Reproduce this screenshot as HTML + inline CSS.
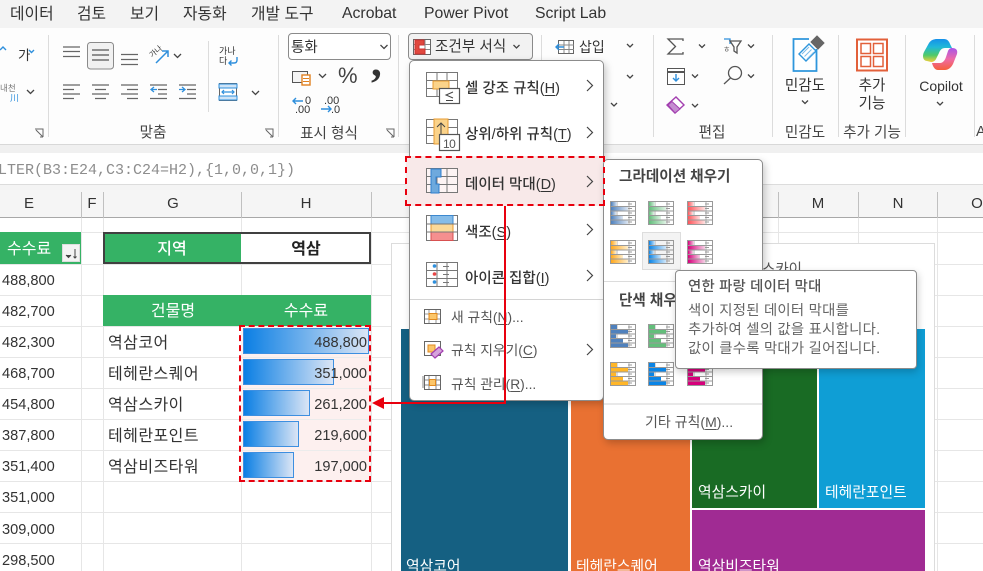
<!DOCTYPE html>
<html lang="ko"><head><meta charset="utf-8"><title>Excel</title>
<style>
html,body{margin:0;padding:0;width:983px;height:571px;overflow:hidden}
#w{position:relative;width:983px;height:571px;overflow:hidden;background:#fff;font-family:"Liberation Sans","Noto Sans CJK KR",sans-serif;color:#333}
.a{position:absolute}
.t{position:absolute;white-space:nowrap;line-height:1}
.c{transform:translateX(-50%)}
.tab{font-size:15.800px;color:#333;top:7px}
.rb{font-size:14.600px;color:#444}
.hl{position:absolute;background:#e6e6e6}
.vs{position:absolute;width:1px;background:#dcdcdc}
.num{position:absolute;white-space:nowrap;line-height:1;font-size:14.600px;color:#333}
.nm{position:absolute;white-space:nowrap;line-height:1;font-size:16px;letter-spacing:.45px;color:#333;left:108px}
.m{position:absolute;white-space:nowrap;line-height:1;font-size:14.500px;font-weight:500;color:#333;left:465px}
.ms{position:absolute;white-space:nowrap;line-height:1;font-size:13.800px;color:#555;left:451px}
.bar{position:absolute;left:243px;height:26px;box-sizing:border-box;border:1px solid #3d8fe0;background:linear-gradient(90deg,#0b7fe4,#dbe5f5)}
.col{position:absolute;top:196px;font-size:15px;line-height:1;color:#333;transform:translateX(-50%)}
.tr{font-size:14.800px;color:#fff}
svg{position:absolute;overflow:visible}
u{text-underline-offset:2px}
</style></head><body><div id="w">

<!-- tab bar -->
<div class="a" style="left:0;top:0;width:983px;height:28px;background:#f3f3f3"></div>
<div class="t tab" style="left:10px">데이터</div>
<div class="t tab" style="left:77px">검토</div>
<div class="t tab" style="left:130px">보기</div>
<div class="t tab" style="left:183px">자동화</div>
<div class="t tab" style="left:251px">개발 도구</div>
<div class="t tab" style="left:342px;top:6px">Acrobat</div>
<div class="t tab" style="left:424px;top:6px">Power Pivot</div>
<div class="t tab" style="left:535px;top:6px">Script Lab</div>

<!-- ribbon -->
<div class="a" style="left:0;top:28px;width:983px;height:116px;background:#fdfdfd"></div>
<div class="a" style="left:0;top:144px;width:983px;height:9px;background:#f0f0f0;border-top:1px solid #d8d8d8;box-sizing:border-box"></div>
<div class="vs" style="left:48px;top:35px;height:102px"></div>
<div class="vs" style="left:208px;top:41px;height:71px"></div>
<div class="vs" style="left:278px;top:35px;height:102px"></div>
<div class="vs" style="left:398px;top:35px;height:102px"></div>
<div class="vs" style="left:541px;top:35px;height:102px"></div>
<div class="vs" style="left:653px;top:35px;height:102px"></div>
<div class="vs" style="left:772px;top:35px;height:102px"></div>
<div class="vs" style="left:838px;top:35px;height:102px"></div>
<div class="vs" style="left:905px;top:35px;height:102px"></div>
<div class="vs" style="left:974px;top:35px;height:102px"></div>

<!-- left ribbon icons -->
<svg style="left:0;top:0" width="400" height="145" fill="none" stroke="#555">
  <path d="M0 50l3-3 3 3" stroke="#2e8fdc" stroke-width="1.400"/>
  <path d="M29 50l2.500 2.500L34 50" stroke="#2e8fdc" stroke-width="1.400"/>
  <rect x="87.500" y="42.500" width="26" height="26.500" rx="3" fill="#f1f1f1" stroke="#8a8a8a"/>
  <path d="M63 47h17M63 51.500h17M63 56.500h17" stroke="#666" stroke-width="1.300"/>
  <path d="M92 50h17M92 55h17M92 60h17" stroke="#555" stroke-width="1.300"/>
  <path d="M121 54.500h17M121 59.500h17M121 64.500h17" stroke="#666" stroke-width="1.300"/>
  <path d="M63 85h17M63 89.500h11M63 94h17M63 98.500h11" stroke="#666" stroke-width="1.300"/>
  <path d="M92 85h17M95 89.500h11M92 94h17M95 98.500h11" stroke="#666" stroke-width="1.300"/>
  <path d="M121 85h17M127 89.500h11M121 94h17M127 98.500h11" stroke="#666" stroke-width="1.300"/>
  <path d="M158 85h9M158 89.500h9M158 94h9M150 98.500h17M150 85h17" stroke="#666" stroke-width="1.300"/>
  <path d="M157 89.500h-6m3-2.500l-3 2.500 3 2.500" stroke="#2e8fdc" stroke-width="1.300"/>
  <path d="M187 85h9M187 89.500h9M187 94h9M179 98.500h17M179 85h17" stroke="#666" stroke-width="1.300"/>
  <path d="M179 89.500h6m-3-2.500l3 2.500-3 2.500" stroke="#2e8fdc" stroke-width="1.300"/>
  <path d="M156 63l12-12m-6 0h6v6" stroke="#2e8fdc" stroke-width="1.500"/>
  <path d="M237 57v3q0 3-3 3h-5m2.500-2.500l-2.500 2.500 2.500 2.500" stroke="#2e8fdc" stroke-width="1.400"/>
  <rect x="219.500" y="83.500" width="17" height="17" stroke="#666" fill="#fff"/>
  <path d="M219 84h18v4h-18zM219 96h18v4h-18z" fill="#cfe4f7" stroke="#2e8fdc"/>
  <path d="M222 92h12m-10-2l-2 2 2 2m8-4l2 2-2 2" stroke="#2e8fdc" stroke-width="1.200"/>
  <path d="M174 54l3.500 3.500L181 54M27 90l3.500 3.500L34 90M252 91l3.500 3.500 3.500-3.500M319 74l3.500 3.500 3.500-3.500" stroke="#444" stroke-width="1.300"/>
  <path d="M35 129h8v8M36 130l7 7M40 137h3" stroke="#666"/>
  <path d="M265 129h8v8M266 130l7 7M270 137h3" stroke="#666"/>
  <path d="M386 129h8v8M387 130l7 7M391 137h3" stroke="#666"/>
  <rect x="292.500" y="71.500" width="15" height="11" stroke="#555" fill="#f4f4f4"/>
  <rect x="302" y="75" width="8" height="10" fill="#fff" stroke="#e08020" stroke-width="1.400"/>
  <path d="M303 78.500h6M303 81.500h6" stroke="#e08020"/>
  <path d="M303 101h-10m3-3l-3 3 3 3" stroke="#2e8fdc" stroke-width="1.400"/>
  <path d="M321 109h10m-3-3l3 3-3 3" stroke="#2e8fdc" stroke-width="1.400"/>
</svg>
<div class="t" style="left:18px;top:49px;font-size:13.500px;color:#333">가</div>
<div class="t" style="left:0;top:84px;font-size:8.500px;color:#777">내천</div>
<div class="t" style="left:10px;top:93px;font-size:9px;color:#2e8fdc;font-family:'Noto Sans CJK KR',sans-serif">川</div>
<div class="t" style="left:149px;top:48px;font-size:7.500px;color:#333;transform:rotate(-40deg)">가나</div>
<div class="t" style="left:219px;top:47px;font-size:9px;color:#333">가나</div>
<div class="t" style="left:219px;top:57px;font-size:9px;color:#333">다</div>
<div class="a" style="left:288px;top:33px;width:103px;height:27px;box-sizing:border-box;border:1px solid #8a8a8a;border-radius:4px;background:#fff"></div>
<div class="t" style="left:291px;top:41px;font-size:14.500px;color:#333">통화</div>
<svg style="left:380px;top:44px" width="8" height="6" fill="none" stroke="#444" stroke-width="1.300"><path d="M.5 1l3.500 3.500L7.500 1"/></svg>
<div class="t" style="left:338px;top:65px;font-size:22px;color:#444">%</div>
<div class="t" style="left:371px;top:41px;font-size:43px;font-weight:700;color:#333;font-family:'Liberation Serif',serif">,</div>
<div class="t" style="left:305px;top:96px;font-size:11px;color:#333">0</div>
<div class="t" style="left:295px;top:105px;font-size:11px;color:#333">.00</div>
<div class="t" style="left:324px;top:96px;font-size:11px;color:#333">.00</div>
<div class="t" style="left:331px;top:105px;font-size:11px;color:#333">.0</div>
<div class="t rb c" style="left:153px;top:126px">맞춤</div>
<div class="t rb c" style="left:329px;top:127px">표시 형식</div>

<!-- right ribbon -->
<div class="a" style="left:408px;top:33px;width:125px;height:27px;box-sizing:border-box;border:1px solid #8a8a8a;border-radius:4px;background:#f2f2f2"></div>
<svg style="left:0;top:0" width="983" height="145" fill="none" stroke="#555">
  <defs>
    <linearGradient id="cp1" x1="0" y1="0" x2="0" y2="1"><stop offset="0" stop-color="#1590ea"/><stop offset=".35" stop-color="#20b8d8"/><stop offset=".7" stop-color="#4fca6a"/><stop offset="1" stop-color="#f4d03a"/></linearGradient>
    <linearGradient id="cp2" x1="0" y1="0" x2="0" y2="1"><stop offset="0" stop-color="#a855e8"/><stop offset=".5" stop-color="#ee6aa8"/><stop offset="1" stop-color="#f5603a"/></linearGradient>
  </defs>
  <rect x="413.500" y="39.500" width="17" height="15" fill="#fff" stroke="#666"/>
  <path d="M414 44.500h16M414 49.500h16M419 40v14M425 40v14" stroke="#888"/>
  <path d="M415 40h9v5h-5v4h6v5h-10z" fill="#e0483e" stroke="#c33"/>
  <rect x="558.500" y="40.500" width="15" height="13" fill="#fff" stroke="#666"/>
  <path d="M559 45h15M559 49.500h15M564 41v12M569 41v12" stroke="#888"/>
  <path d="M564 47h-8m3-3l-3 3 3 3" stroke="#2e8fdc" stroke-width="1.400"/>
  <path d="M627 44l3 3 3-3M627 75l3 3 3-3M611 103l3 3 3-3M699 44.500l3 3 3-3M748 44.500l3 3 3-3M692 74.500l3 3 3-3M748 74.500l3 3 3-3M692 104l3 3 3-3M802 100.500l3 3 3-3M937 102l3 3 3-3" stroke="#444" stroke-width="1.300"/>
  <path d="M683 41v-2h-15l7.500 7.500-7.500 7.500h15v-2" stroke="#555" stroke-width="1.300"/>
  <path d="M724 39h6v5" stroke="#2e8fdc" stroke-width="1.300"/>
  <path d="M730 41h11l-4 6v6l-3-2v-4z" stroke="#555" stroke-width="1.300"/>
  <rect x="667.500" y="68.500" width="17" height="16" fill="#fff" stroke="#555"/>
  <path d="M667 72h18" stroke="#555" stroke-width="2"/>
  <path d="M676 74v7m-3-3l3 3 3-3" stroke="#2e8fdc" stroke-width="1.400"/>
  <circle cx="735" cy="73" r="6.500" stroke="#555" stroke-width="1.300"/>
  <path d="M730.500 78l-6.500 6" stroke="#555" stroke-width="1.300"/>
  <path d="M667 105l9-8 8 8-9 8z" fill="#fff" stroke="#a33fb0" stroke-width="1.400"/>
  <path d="M668 105l4-3.500 8 7.500-5 4z" fill="#c58ed0" stroke="#a33fb0"/>
  <path d="M809 39h-15.500v32h23v-22" stroke="#2e96dc" stroke-width="1.800" fill="#fff"/>
  <path d="M799 54l10-10 7 7-10 10z" fill="#fff" stroke="#2e96dc" stroke-width="1.400"/>
  <path d="M802 54l7-7M804.500 56.500l7-7M807 59l7-7" stroke="#7cbcea" stroke-width="1"/>
  <path d="M811 42l6-6 7 7-6 6z" fill="#666" stroke="#666"/>
  <rect x="857" y="39.500" width="30" height="31" fill="#fff" stroke="#e2603a" stroke-width="2"/>
  <rect x="861" y="43.500" width="9.500" height="10" stroke="#e2603a" stroke-width="1.500"/>
  <rect x="873.500" y="43.500" width="9.500" height="10" stroke="#e2603a" stroke-width="1.500"/>
  <rect x="861" y="56.500" width="9.500" height="10" stroke="#e2603a" stroke-width="1.500"/>
  <rect x="873.500" y="56.500" width="9.500" height="10" stroke="#e2603a" stroke-width="1.500"/>
  <path d="M927 61C923 61 922 56 924 52L929 43C931 40 934 39 937 39H944C947 39 949 41 950 44L952 48H945C942 48 940 50 939 53L936 59C935 61 933 62 931 62Z" fill="url(#cp1)" stroke="none"/>
  <path d="M938 70C935 70 933 67 932 63H940C943 63 945 60 946 57L948 51C949 49 950 48 952 48C956 48 958 50 957 54L953 64C951 68 948 70 945 70Z" fill="url(#cp2)" stroke="none"/>
</svg>
<div class="t" style="left:723px;top:46px;font-size:8px;color:#666">ㅎ</div>
<div class="t" style="left:435px;top:40px;font-size:14.600px;color:#333">조건부 서식</div>
<svg style="left:513px;top:44px" width="8" height="6" fill="none" stroke="#444" stroke-width="1.300"><path d="M.5 1l3 3 3-3"/></svg>
<div class="t" style="left:579px;top:40px;font-size:14px;color:#333">삽입</div>
<div class="t c" style="left:805px;top:79px;font-size:14.600px;color:#333">민감도</div>
<div class="t c" style="left:872px;top:79px;font-size:14.600px;color:#333">추가</div>
<div class="t c" style="left:872px;top:97px;font-size:14.600px;color:#333">기능</div>
<div class="t c" style="left:941px;top:79px;font-size:14px;color:#333">Copilot</div>
<div class="t rb c" style="left:712px;top:126px">편집</div>
<div class="t rb c" style="left:805px;top:126px">민감도</div>
<div class="t rb c" style="left:872px;top:126px">추가 기능</div>
<div class="t rb" style="left:976px;top:125px">A</div>

<!-- formula bar -->
<div class="a" style="left:0;top:153px;width:983px;height:31px;background:#fff;border-bottom:1px solid #dcdcdc"></div>
<div class="t" style="left:-2px;top:163px;font:15px/1 'Liberation Mono',monospace;color:#8d8d8d">LTER(B3:E24,C3:C24=H2),{1,0,0,1})</div>
<div class="a" style="left:0;top:185px;width:983px;height:5px;background:#f4f4f4"></div>

<!-- col headers -->
<div class="a" style="left:0;top:190px;width:983px;height:28px;background:#f5f5f5;border-bottom:1px solid #a8a8a8;box-sizing:border-box"></div>
<div class="vs" style="left:81px;top:192px;height:26px;background:#c0c0c0"></div>
<div class="vs" style="left:103px;top:192px;height:26px;background:#c0c0c0"></div>
<div class="vs" style="left:241px;top:192px;height:26px;background:#c0c0c0"></div>
<div class="vs" style="left:371px;top:192px;height:26px;background:#c0c0c0"></div>
<div class="vs" style="left:778px;top:192px;height:26px;background:#c0c0c0"></div>
<div class="vs" style="left:858px;top:192px;height:26px;background:#c0c0c0"></div>
<div class="vs" style="left:937px;top:192px;height:26px;background:#c0c0c0"></div>
<div class="col" style="left:29px">E</div>
<div class="col" style="left:92px">F</div>
<div class="col" style="left:173px">G</div>
<div class="col" style="left:306px">H</div>
<div class="col" style="left:818px">M</div>
<div class="col" style="left:898px">N</div>
<div class="col" style="left:977px">O</div>

<!-- grid -->
<div class="hl" style="left:0;top:232px;width:983px;height:1px"></div>
<div class="hl" style="left:0;top:264px;width:983px;height:1px"></div>
<div class="hl" style="left:0;top:295px;width:983px;height:1px"></div>
<div class="hl" style="left:0;top:326px;width:983px;height:1px"></div>
<div class="hl" style="left:0;top:357px;width:983px;height:1px"></div>
<div class="hl" style="left:0;top:388px;width:983px;height:1px"></div>
<div class="hl" style="left:0;top:419px;width:983px;height:1px"></div>
<div class="hl" style="left:0;top:450px;width:983px;height:1px"></div>
<div class="hl" style="left:0;top:481px;width:983px;height:1px"></div>
<div class="hl" style="left:0;top:512px;width:983px;height:1px"></div>
<div class="hl" style="left:0;top:543px;width:983px;height:1px"></div>
<div class="vs" style="left:81px;top:218px;height:353px;background:#e6e6e6"></div>
<div class="vs" style="left:103px;top:218px;height:353px;background:#e6e6e6"></div>
<div class="vs" style="left:241px;top:218px;height:353px;background:#e6e6e6"></div>
<div class="vs" style="left:371px;top:218px;height:353px;background:#e6e6e6"></div>
<div class="vs" style="left:778px;top:218px;height:50px;background:#e6e6e6"></div>
<div class="vs" style="left:858px;top:218px;height:50px;background:#e6e6e6"></div>
<div class="vs" style="left:937px;top:218px;height:353px;background:#e6e6e6"></div>

<!-- E column -->
<div class="a" style="left:0;top:232px;width:81px;height:32px;background:#35b265"></div>
<div class="t" style="left:7px;top:242px;font-size:16px;color:#fff">수수료</div>
<div class="a" style="left:62px;top:244px;width:18px;height:18px;background:#f3f3f3;border:1px solid #ddd;box-sizing:border-box"></div>
<svg style="left:64px;top:248px" width="15" height="12" fill="none" stroke="#444"><path d="M2 7l2.500 2.500L7 7" fill="#444"/><path d="M11 1v9m-1.500-1.500l1.500 1.500 1.500-1.500"/></svg>
<div class="num" style="left:2px;top:274px">488,800</div>
<div class="num" style="left:2px;top:305px">482,700</div>
<div class="num" style="left:2px;top:336px">482,300</div>
<div class="num" style="left:2px;top:367px">468,700</div>
<div class="num" style="left:2px;top:398px">454,800</div>
<div class="num" style="left:2px;top:429px">387,800</div>
<div class="num" style="left:2px;top:460px">351,400</div>
<div class="num" style="left:2px;top:491px">351,000</div>
<div class="num" style="left:2px;top:523px">309,000</div>
<div class="num" style="left:2px;top:554px">298,500</div>

<!-- region box -->
<div class="a" style="left:103px;top:232px;width:268px;height:32px;box-sizing:border-box;border:2px solid #404040;background:#fff"></div>
<div class="a" style="left:105px;top:234px;width:136px;height:28px;background:#35b265"></div>
<div class="t c" style="left:172px;top:242px;font-size:16px;color:#fff;font-weight:500">지역</div>
<div class="t c" style="left:306px;top:242px;font-size:16px;color:#222;font-weight:700">역삼</div>

<!-- table -->
<div class="a" style="left:103px;top:295px;width:268px;height:31px;background:#35b265"></div>
<div class="t c" style="left:173px;top:304px;font-size:16px;color:#fff">건물명</div>
<div class="t c" style="left:306px;top:304px;font-size:16px;color:#fff">수수료</div>
<div class="a" style="left:241px;top:326px;width:130px;height:155px;background:#fdf0ef"></div>
<div class="hl" style="left:241px;top:357px;width:130px;height:1px;background:#ececec"></div>
<div class="hl" style="left:241px;top:388px;width:130px;height:1px;background:#ececec"></div>
<div class="hl" style="left:241px;top:419px;width:130px;height:1px;background:#ececec"></div>
<div class="hl" style="left:241px;top:450px;width:130px;height:1px;background:#ececec"></div>
<div class="bar" style="top:328px;width:126px"></div>
<div class="bar" style="top:359px;width:91px"></div>
<div class="bar" style="top:390px;width:67px"></div>
<div class="bar" style="top:421px;width:56px"></div>
<div class="bar" style="top:452px;width:51px"></div>
<div class="nm" style="top:336px">역삼코어</div>
<div class="nm" style="top:367px">테헤란스퀘어</div>
<div class="nm" style="top:398px">역삼스카이</div>
<div class="nm" style="top:429px">테헤란포인트</div>
<div class="nm" style="top:460px">역삼비즈타워</div>
<div class="num" style="right:616px;top:336px">488,800</div>
<div class="num" style="right:616px;top:367px">351,000</div>
<div class="num" style="right:616px;top:398px">261,200</div>
<div class="num" style="right:616px;top:429px">219,600</div>
<div class="num" style="right:616px;top:460px">197,000</div>
<div class="a" style="left:239px;top:325px;width:132px;height:157px;box-sizing:border-box;border:2px dashed #e8000e"></div>

<!-- chart -->
<div class="a" style="left:391px;top:243px;width:544px;height:328px;background:#fff;border:1px solid #dcdcdc;border-bottom:0;box-sizing:border-box"></div>
<div class="t" style="left:762px;top:263px;font-size:14.500px;color:#555">스카이</div>
<div class="a" style="left:401px;top:329px;width:167px;height:242px;background:#156082"></div>
<div class="a" style="left:571px;top:329px;width:119px;height:242px;background:#e97132"></div>
<div class="a" style="left:692px;top:329px;width:125px;height:179px;background:#196b24"></div>
<div class="a" style="left:819px;top:329px;width:106px;height:179px;background:#0f9ed5"></div>
<div class="a" style="left:692px;top:510px;width:233px;height:61px;background:#a02b93"></div>
<div class="t tr" style="left:406px;top:560px">역삼코어</div>
<div class="t tr" style="left:576px;top:560px">테헤란스퀘어</div>
<div class="t tr" style="left:698px;top:560px">역삼비즈타워</div>
<div class="t tr" style="left:698px;top:486px">역삼스카이</div>
<div class="t tr" style="left:825px;top:486px">테헤란포인트</div>

<!-- main menu -->
<div class="a" style="left:409px;top:60px;width:195px;height:341px;box-sizing:border-box;background:#fff;border:1px solid #8c8c8c;border-radius:5px;box-shadow:2px 3px 8px rgba(0,0,0,.22)"></div>
<div class="a" style="left:406px;top:156px;width:199px;height:50px;background:#f8e9e9"></div>
<div class="a" style="left:410px;top:299px;width:193px;height:1px;background:#d4d4d4"></div>

<svg style="left:0;top:0" width="983" height="420" fill="none" stroke="#777">
  <rect x="426.500" y="72.500" width="31" height="24" fill="#fff"/>
  <path d="M427 80.500h30M427 88.500h30M437 73v23M447 73v23"/>
  <rect x="433" y="81" width="16" height="8" fill="#fbd38a" stroke="#e79b32"/>
  <rect x="439.500" y="88.500" width="20" height="15" fill="#fff" stroke="#555" stroke-width="1.200"/>
  <path d="M453 92l-7 3 7 3M446 100.500h7" stroke="#444"/>
  <rect x="426.500" y="119.500" width="31" height="24" fill="#fff"/>
  <path d="M427 127.500h30M427 135.500h30M437 120v23M447 120v23"/>
  <rect x="434" y="119" width="14" height="25" fill="#fbd38a" stroke="#e79b32"/>
  <path d="M441 135v-12m-4 4l4-4 4 4" stroke="#444"/>
  <rect x="439.500" y="134.500" width="20" height="16" fill="#fff" stroke="#555" stroke-width="1.200"/>
  <rect x="426.500" y="168.500" width="31" height="24" fill="#fdf4f4"/>
  <path d="M427 176.500h30M427 184.500h30M437 169v23M447 169v23"/>
  <path d="M431 169h10v8h-5v7h3v9h-8z" fill="#6ea9dd" stroke="#2e7fd0"/>
  <rect x="426.500" y="215.500" width="31" height="25" fill="#fff"/>
  <rect x="431" y="215.500" width="22" height="8.500" fill="#86bce8" stroke="#3c88cf"/>
  <rect x="431" y="224" width="22" height="8" fill="#fcd998" stroke="#e79b32"/>
  <rect x="431" y="232" width="22" height="8.500" fill="#f58f8f" stroke="#d85050"/>
  <path d="M426.500 224h31M426.500 232h31"/>
  <rect x="426.500" y="262.500" width="31" height="24" fill="#fff"/>
  <path d="M427 270.500h30M427 278.500h30M437 263v23M447 263v23"/>
  <circle cx="434.500" cy="266" r="1.800" fill="#2e8fdc" stroke="none"/>
  <circle cx="434.500" cy="274" r="1.800" fill="#e84545" stroke="none"/>
  <circle cx="434.500" cy="282" r="1.800" fill="#2e8fdc" stroke="none"/>
  <path d="M443 266.500h6M443 274.500h6M443 282.500h6" stroke="#777"/>
  <rect x="424.500" y="309.500" width="16" height="14" fill="#fff" stroke="#666"/>
  <path d="M425 314h15M425 319h15M429 310v13M436 310v13" stroke="#999"/>
  <rect x="429" y="313.500" width="8" height="6" fill="#fbc66a" stroke="#e08a20"/>
  <rect x="424.500" y="341.500" width="16" height="14" fill="#fff" stroke="#666"/>
  <rect x="428" y="345" width="7" height="7" fill="#fbc66a" stroke="#e08a20"/>
  <path d="M431 354l8-7 4 4-8 7z" fill="#d6a3dc" stroke="#a33fb0" stroke-width="1.200"/>
  <rect x="424.500" y="375.500" width="16" height="14" fill="#fff" stroke="#666"/>
  <path d="M423 376v12M425 380h15M425 385h15M429 376v13M436 376v13" stroke="#888"/>
  <rect x="429.500" y="379.500" width="6" height="6" fill="#fbc66a" stroke="#e08a20"/>
  <path d="M587 80l5.500 5.500-5.500 5.500M587 127l5.500 5.500-5.500 5.500M587 176l5.500 5.500-5.500 5.500M587 224l5.500 5.500-5.500 5.500M587 270l5.500 5.500-5.500 5.500M587 344l5.500 5.500-5.500 5.500" stroke="#444" stroke-width="1.200"/>
</svg>
<div class="t" style="left:443px;top:138px;font-size:12px;color:#555;letter-spacing:-.5px">10</div>
<div class="m" style="top:82px">셀 강조 규칙(<u>H</u>)</div>
<div class="m" style="top:128px">상위/하위 규칙(<u>T</u>)</div>
<div class="m" style="top:178px">데이터 막대(<u>D</u>)</div>
<div class="m" style="top:226px">색조(<u>S</u>)</div>
<div class="m" style="top:272px">아이콘 집합(<u>I</u>)</div>
<div class="ms" style="top:311px">새 규칙(<u>N</u>)...</div>
<div class="ms" style="top:344px">규칙 지우기(<u>C</u>)</div>
<div class="ms" style="top:378px">규칙 관리(<u>R</u>)...</div>

<!-- submenu -->
<div class="a" style="left:603px;top:159px;width:160px;height:281px;box-sizing:border-box;background:#fff;border:1px solid #8c8c8c;border-radius:5px;box-shadow:2px 3px 8px rgba(0,0,0,.22)"></div>
<div class="t" style="left:619px;top:170px;font-size:14.600px;font-weight:700;color:#444">그라데이션 채우기</div>
<div class="a" style="left:604px;top:281px;width:158px;height:1px;background:#dcdcdc"></div>
<div class="t" style="left:619px;top:294px;font-size:14.600px;font-weight:700;color:#444">단색 채우기</div>
<div class="a" style="left:604px;top:403px;width:158px;height:2px;background:#e8e8e8"></div>
<div class="t" style="left:645px;top:415px;font-size:14px;color:#555">기타 규칙(<u>M</u>)...</div>
<div class="a" style="left:642px;top:232px;width:39px;height:38px;box-sizing:border-box;background:#f3f3f3;border:1px solid #ddd"></div>

<svg style="left:0;top:0" width="983" height="420" stroke="none">
  <defs>
    <linearGradient id="g1"><stop offset="0" stop-color="#4f81bd"/><stop offset="1" stop-color="#dbe5f1"/></linearGradient>
    <linearGradient id="g2"><stop offset="0" stop-color="#63be7b"/><stop offset="1" stop-color="#dff2e4"/></linearGradient>
    <linearGradient id="g3"><stop offset="0" stop-color="#ff555a"/><stop offset="1" stop-color="#ffe0e0"/></linearGradient>
    <linearGradient id="g4"><stop offset="0" stop-color="#ffa81c"/><stop offset="1" stop-color="#ffeecb"/></linearGradient>
    <linearGradient id="g5"><stop offset="0" stop-color="#0a84e6"/><stop offset="1" stop-color="#cfe6fa"/></linearGradient>
    <linearGradient id="g6"><stop offset="0" stop-color="#d6007b"/><stop offset="1" stop-color="#f5cfe4"/></linearGradient>
    <g id="mi">
      <path d="M7 .5v23M19 .5v23" fill="none" stroke="#b4b4b4" stroke-width="1"/>
      <rect x="1" y="1" width="6" height="4"/>
      <rect x="1" y="5.500" width="17" height="4"/>
      <rect x="1" y="10" width="5" height="4"/>
      <rect x="1" y="14.500" width="12" height="4"/>
      <rect x="1" y="19" width="17" height="4"/>
      <path d="M.5.500h25v23H.5zM.5 5.500h25M.5 10h25M.5 14.500h25M.5 19h25" fill="none" stroke="#999" stroke-width="1"/>
      <path d="M18 3h4M18 7.500h4M18 12h4M18 16.500h4M18 21h4" fill="none" stroke="#999" stroke-width="1"/>
    </g>
  </defs>
  <use href="#mi" x="610" y="201" fill="url(#g1)"/>
  <use href="#mi" x="648" y="201" fill="url(#g2)"/>
  <use href="#mi" x="687" y="201" fill="url(#g3)"/>
  <use href="#mi" x="610" y="240" fill="url(#g4)"/>
  <use href="#mi" x="648" y="240" fill="url(#g5)"/>
  <use href="#mi" x="687" y="240" fill="url(#g6)"/>
  <use href="#mi" x="610" y="324" fill="#4f81bd"/>
  <use href="#mi" x="648" y="324" fill="#63be7b"/>
  <use href="#mi" x="687" y="324" fill="#ff555a"/>
  <use href="#mi" x="610" y="362" fill="#ffb628"/>
  <use href="#mi" x="648" y="362" fill="#0a84e6"/>
  <use href="#mi" x="687" y="362" fill="#d6007b"/>
</svg>

<!-- tooltip -->
<div class="a" style="left:675px;top:270px;width:242px;height:99px;box-sizing:border-box;background:#fff;border:1px solid #8c8c8c;border-radius:4px;box-shadow:1px 3px 8px rgba(0,0,0,.2)"></div>
<div class="t" style="left:688px;top:280px;font-size:14.400px;letter-spacing:.2px;font-weight:500;color:#555">연한 파랑 데이터 막대</div>
<div class="t" style="left:688px;top:304px;font-size:14.400px;letter-spacing:.25px;color:#666">색이 지정된 데이터 막대를</div>
<div class="t" style="left:688px;top:323px;font-size:14.400px;letter-spacing:.25px;color:#666">추가하여 셀의 값을 표시합니다.</div>
<div class="t" style="left:688px;top:342px;font-size:14.400px;letter-spacing:.25px;color:#666">값이 클수록 막대가 길어집니다.</div>

<!-- red annotations -->
<div class="a" style="left:405px;top:156px;width:200px;height:50px;box-sizing:border-box;border:2px dashed #e8000e"></div>
<svg style="left:0;top:0" width="983" height="571" fill="none">
  <path d="M505 206v197H380" stroke="#e8000e" stroke-width="2"/>
  <path d="M372 403l12-6v12z" fill="#e8000e"/>
</svg>
</div></body></html>
